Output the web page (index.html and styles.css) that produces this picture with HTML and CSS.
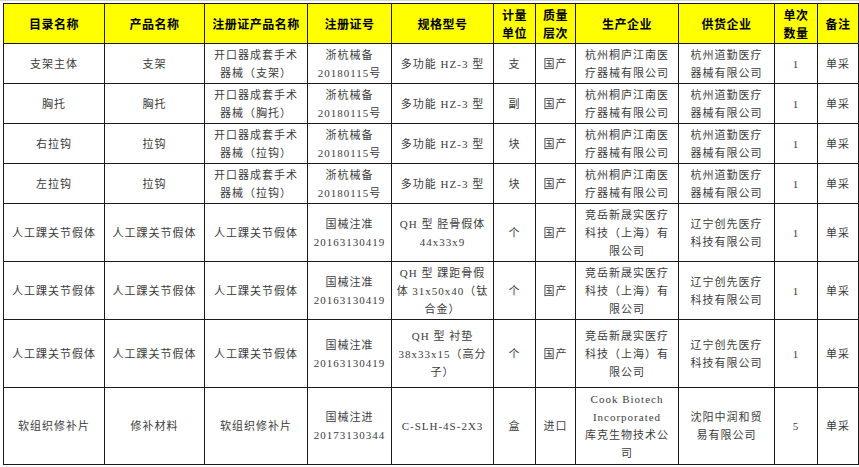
FILE: index.html
```html
<!DOCTYPE html>
<html lang="zh-CN">
<head>
<meta charset="utf-8">
<title>耗材目录</title>
<link rel="stylesheet" href="styles.css">
</head>
<body>
<div class="page">
<table class="grid">
  <colgroup>
    <col class="c1"><col class="c2"><col class="c3"><col class="c4"><col class="c5"><col class="c6"><col class="c7"><col class="c8"><col class="c9"><col class="c10"><col class="c11">
  </colgroup>
  <thead>
    <tr class="h40">
      <th>目录名称</th><th>产品名称</th><th>注册证产品名称</th><th>注册证号</th><th>规格型号</th><th>计量<br>单位</th><th>质量<br>层次</th><th>生产企业</th><th>供货企业</th><th>单次<br>数量</th><th>备注</th>
    </tr>
  </thead>
  <tbody>
    <tr class="h40">
      <td>支架主体</td><td>支架</td><td>开口器成套手术<br>器械（支架）</td><td>浙杭械备<br>20180115号</td><td>多功能 HZ-3 型</td><td>支</td><td>国产</td><td>杭州桐庐江南医<br>疗器械有限公司</td><td>杭州道勤医疗<br>器械有限公司</td><td>1</td><td>单采</td>
    </tr>
    <tr class="h40">
      <td>胸托</td><td>胸托</td><td>开口器成套手术<br>器械（胸托）</td><td>浙杭械备<br>20180115号</td><td>多功能 HZ-3 型</td><td>副</td><td>国产</td><td>杭州桐庐江南医<br>疗器械有限公司</td><td>杭州道勤医疗<br>器械有限公司</td><td>1</td><td>单采</td>
    </tr>
    <tr class="h40">
      <td>右拉钩</td><td>拉钩</td><td>开口器成套手术<br>器械（拉钩）</td><td>浙杭械备<br>20180115号</td><td>多功能 HZ-3 型</td><td>块</td><td>国产</td><td>杭州桐庐江南医<br>疗器械有限公司</td><td>杭州道勤医疗<br>器械有限公司</td><td>1</td><td>单采</td>
    </tr>
    <tr class="h40">
      <td>左拉钩</td><td>拉钩</td><td>开口器成套手术<br>器械（拉钩）</td><td>浙杭械备<br>20180115号</td><td>多功能 HZ-3 型</td><td>块</td><td>国产</td><td>杭州桐庐江南医<br>疗器械有限公司</td><td>杭州道勤医疗<br>器械有限公司</td><td>1</td><td>单采</td>
    </tr>
    <tr class="h58">
      <td>人工踝关节假体</td><td>人工踝关节假体</td><td>人工踝关节假体</td><td>国械注准<br>20163130419</td><td>QH 型 胫骨假体<br>44x33x9</td><td>个</td><td>国产</td><td>竞岳新晟实医疗<br>科技（上海）有<br>限公司</td><td>辽宁创先医疗<br>科技有限公司</td><td>1</td><td>单采</td>
    </tr>
    <tr class="h58">
      <td>人工踝关节假体</td><td>人工踝关节假体</td><td>人工踝关节假体</td><td>国械注准<br>20163130419</td><td>QH 型 踝距骨假<br>体 31x50x40（钛<br>合金）</td><td>个</td><td>国产</td><td>竞岳新晟实医疗<br>科技（上海）有<br>限公司</td><td>辽宁创先医疗<br>科技有限公司</td><td>1</td><td>单采</td>
    </tr>
    <tr class="h68">
      <td>人工踝关节假体</td><td>人工踝关节假体</td><td>人工踝关节假体</td><td>国械注准<br>20163130419</td><td>QH 型 衬垫<br>38x33x15（高分<br>子）</td><td>个</td><td>国产</td><td>竞岳新晟实医疗<br>科技（上海）有<br>限公司</td><td>辽宁创先医疗<br>科技有限公司</td><td>1</td><td>单采</td>
    </tr>
    <tr class="h77">
      <td>软组织修补片</td><td>修补材料</td><td>软组织修补片</td><td>国械注进<br>20173130344</td><td>C-SLH-4S-2X3</td><td>盒</td><td>进口</td><td>Cook Biotech<br>Incorporated<br>库克生物技术公<br>司</td><td>沈阳中润和贸<br>易有限公司</td><td>5</td><td>单采</td>
    </tr>
  </tbody>
</table>
</div>
</body>
</html>
```

FILE: styles.css
```css
html, body {
  margin: 0;
  padding: 0;
  background: #ffffff;
}

.page {
  border-top: 1px solid #d4d4d4;
  padding: 2px 0 0 3px;
}

.grid {
  border-collapse: collapse;
  table-layout: fixed;
  width: 855px;
  font-family: "Liberation Serif", "Noto Sans CJK SC", serif;
  font-size: 11px;
  line-height: 18px;
  color: #3c3c3c;
}

.c1 { width: 101px; }
.c2 { width: 100px; }
.c3 { width: 103px; }
.c4 { width: 84px; }
.c5 { width: 102px; }
.c6 { width: 42px; }
.c7 { width: 40px; }
.c8 { width: 103px; }
.c9 { width: 96px; }
.c10 { width: 43px; }
.c11 { width: 41px; }

.grid th,
.grid td {
  border: 1px solid #1a1a1a;
  padding: 0 2px;
  text-align: center;
  vertical-align: middle;
  white-space: nowrap;
  overflow: hidden;
}

.grid th {
  background: #ffff00;
  color: #000000;
  font-family: "Noto Sans CJK SC", sans-serif;
  font-weight: 700;
  font-size: 12px;
  line-height: 18px;
  letter-spacing: 0.5px;
}

.grid td {
  font-weight: 400;
  letter-spacing: 1px;
}

.h40 { height: 40px; }
.h58 { height: 58px; }
.h68 { height: 68px; }
.h77 { height: 77px; }
```
